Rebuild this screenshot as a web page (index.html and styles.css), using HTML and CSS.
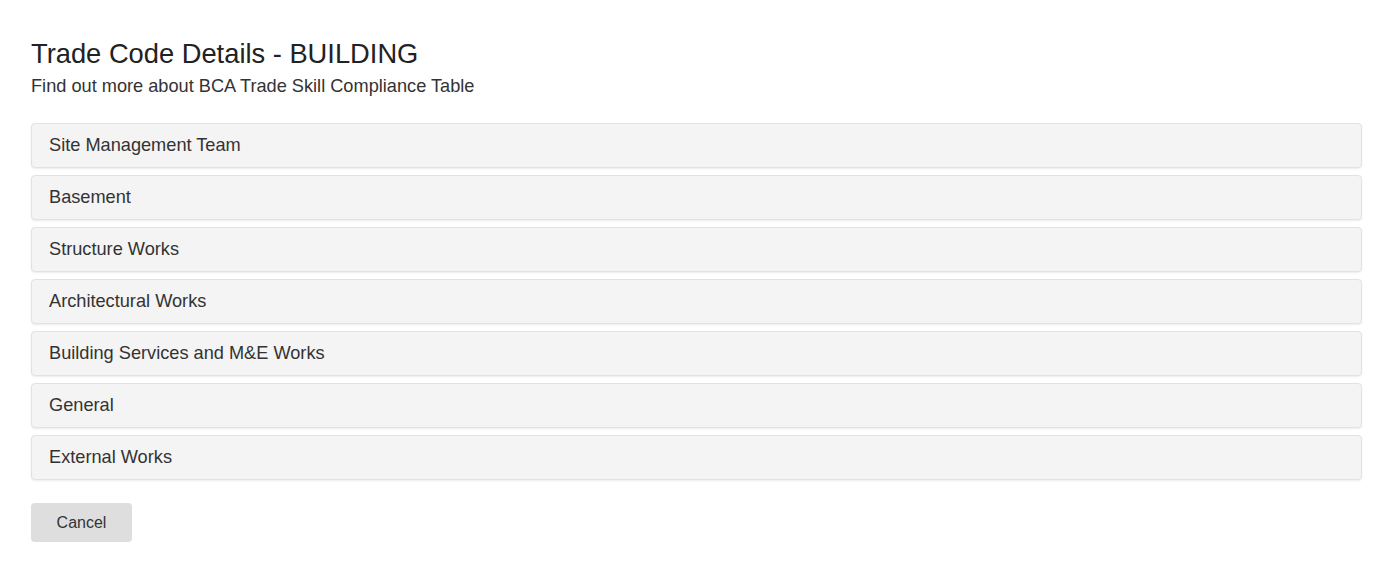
FILE: index.html
```html
<!DOCTYPE html>
<html>
<head>
<meta charset="utf-8">
<link rel="stylesheet" href="styles.css">
</head>
<body>
<div class="page">
  <h1 class="title">Trade Code Details - BUILDING</h1>
  <p class="subtitle">Find out more about BCA Trade Skill Compliance Table</p>
  <div class="panel-group">
    <div class="panel">Site Management Team</div>
    <div class="panel">Basement</div>
    <div class="panel">Structure Works</div>
    <div class="panel">Architectural Works</div>
    <div class="panel">Building Services and M&amp;E Works</div>
    <div class="panel">General</div>
    <div class="panel">External Works</div>
  </div>
  <button class="btn">Cancel</button>
</div>
</body>
</html>
```
FILE: styles.css
```css
html, body {
  margin: 0;
  padding: 0;
  background: #fff;
}
body {
  font-family: "Liberation Sans", Arial, sans-serif;
  color: #333;
}
.page {
  padding: 38px 31px 0 31px;
}
.title {
  margin: 0;
  font-size: 27.3px;
  font-weight: normal;
  line-height: 31px;
  color: #222;
}
.subtitle {
  margin: 6px 0 0 0;
  font-size: 18.2px;
  line-height: 22px;
  color: #333;
}
.panel-group {
  margin-top: 26px;
  display: flex;
  flex-direction: column;
  gap: 7px;
}
.panel {
  height: 43px;
  box-sizing: content-box;
  border: 1px solid #e2e2e2;
  border-radius: 4px;
  background: #f4f4f4;
  box-shadow: 0 1px 2px rgba(0,0,0,0.08);
  padding: 0 17px;
  display: flex;
  align-items: center;
  font-size: 18.2px;
  color: #333;
}
.btn {
  margin-top: 23px;
  width: 101px;
  height: 39px;
  border: none;
  border-radius: 4px;
  background: #dedede;
  font-family: "Liberation Sans", Arial, sans-serif;
  font-size: 16px;
  color: #333;
  padding: 0;
}
```
